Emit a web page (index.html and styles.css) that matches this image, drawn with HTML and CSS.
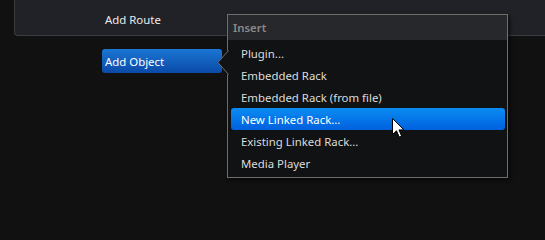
FILE: index.html
```html
<!DOCTYPE html>
<html>
<head>
<meta charset="utf-8">
<link rel="stylesheet" href="styles.css">
</head>
<body>
<div class="panel">
  <div class="route">Add Route</div>
</div>
<div class="object-row">
  <div class="btn">Add Object</div>
</div>
<div class="menu">
  <svg class="notch" width="12" height="26" viewBox="0 0 12 26">
    <polygon points="11,0 1,12.5 11,25 12,25 12,0" fill="#111213"/>
    <polyline points="11.5,0.5 1,12.5 11.5,24.5" fill="none" stroke="#6e6e6e" stroke-width="1"/>
  </svg>
  <div class="menu-head">Insert</div>
  <div class="menu-body">
    <div class="item">Plugin...</div>
    <div class="item">Embedded Rack</div>
    <div class="item">Embedded Rack (from file)</div>
    <div class="item active">New Linked Rack...</div>
    <div class="item">Existing Linked Rack...</div>
    <div class="item">Media Player</div>
  </div>
</div>
<svg class="cursor" width="13" height="20" viewBox="0 0 13 20">
  <path d="M0.5 0.5 L0.5 16.5 L4.5 12.8 L7.2 19 L9.6 18 L7 11.9 L12 11.9 Z" fill="#ffffff" stroke="#000000" stroke-width="1" stroke-linejoin="miter"/>
</svg>
</body>
</html>
```

FILE: styles.css
```css
html, body {
  margin: 0;
  padding: 0;
}
body {
  background: #111111;
  width: 545px;
  height: 200px;
  overflow: hidden;
  position: relative;
  font-family: "Noto Sans", "Open Sans", sans-serif;
  font-size: 11.4px;
  color: #e0e0e0;
}
.panel {
  margin-left: 14px;
  background: #212227;
  border-left: 1px solid #3b3c41;
  border-bottom: 1px solid #3b3c41;
  border-bottom-left-radius: 4px;
  display: flex;
  align-items: center;
  padding-left: 90px;
  padding-top: 4px;
  box-sizing: border-box;
  height: 36px;
}
.route {
  color: #ececec;
}
.object-row {
  padding: 13px 0 0 102px;
  display: flex;
}
.btn {
  width: 117px;
  height: 24px;
  padding-left: 3px;
  border-radius: 3px;
  background: linear-gradient(#1b76d4, #0b4aa8);
  color: #ffffff;
  display: flex;
  align-items: center;
}
.menu {
  position: absolute;
  left: 227px;
  top: 14px;
  width: 279px;
  border: 1px solid #6e6e6e;
  background: #111213;
  box-shadow: 2px 2px 4px rgba(0, 0, 0, 0.6);
}
.notch {
  position: absolute;
  left: -11px;
  top: 35px;
}
.menu-head {
  height: 25px;
  background: #27282c;
  color: #8a8a8a;
  font-weight: 600;
  padding-left: 5px;
  display: flex;
  align-items: center;
}
.menu-body {
  padding: 2px 2px 3px 3px;
}
.item {
  height: 22px;
  padding-left: 10px;
  display: flex;
  align-items: center;
  color: #dcdcdc;
  border-radius: 3px;
}
.item.active {
  background: linear-gradient(#0b8cf3, #0060de);
  color: #ffffff;
}
.cursor {
  position: absolute;
  left: 392px;
  top: 118px;
}
```
